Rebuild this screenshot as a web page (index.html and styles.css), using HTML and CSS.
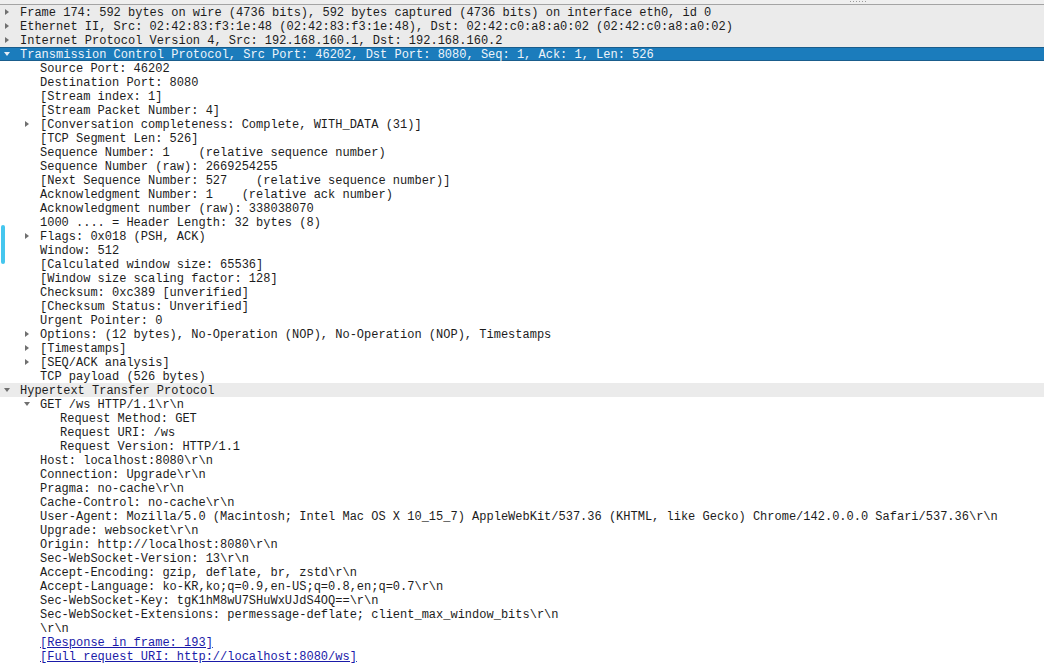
FILE: index.html
```
<!DOCTYPE html>
<html lang="en">
<head>
    <meta charset="UTF-8">
    <title>Packet Details</title>
    <link rel="stylesheet" href="styles.css">
</head>
<body>
    <div class="splitter">
        <div class="grip"><i></i><i></i><i></i><i></i><i></i><i></i></div>
    </div>

    <div class="tree">
        <div class="row top"><span class="arrow closed"></span>Frame 174: 592 bytes on wire (4736 bits), 592 bytes captured (4736 bits) on interface eth0, id 0</div>
        <div class="row top"><span class="arrow closed"></span>Ethernet II, Src: 02:42:83:f3:1e:48 (02:42:83:f3:1e:48), Dst: 02:42:c0:a8:a0:02 (02:42:c0:a8:a0:02)</div>
        <div class="row top"><span class="arrow closed"></span>Internet Protocol Version 4, Src: 192.168.160.1, Dst: 192.168.160.2</div>
        <div class="row selected"><span class="arrow open"></span>Transmission Control Protocol, Src Port: 46202, Dst Port: 8080, Seq: 1, Ack: 1, Len: 526</div>

        <!-- TCP -->
        <div class="row l1"><span class="arrow"></span>Source Port: 46202</div>
        <div class="row l1"><span class="arrow"></span>Destination Port: 8080</div>
        <div class="row l1"><span class="arrow"></span>[Stream index: 1]</div>
        <div class="row l1"><span class="arrow"></span>[Stream Packet Number: 4]</div>
        <div class="row l1"><span class="arrow closed"></span>[Conversation completeness: Complete, WITH_DATA (31)]</div>
        <div class="row l1"><span class="arrow"></span>[TCP Segment Len: 526]</div>
        <div class="row l1"><span class="arrow"></span>Sequence Number: 1    (relative sequence number)</div>
        <div class="row l1"><span class="arrow"></span>Sequence Number (raw): 2669254255</div>
        <div class="row l1"><span class="arrow"></span>[Next Sequence Number: 527    (relative sequence number)]</div>
        <div class="row l1"><span class="arrow"></span>Acknowledgment Number: 1    (relative ack number)</div>
        <div class="row l1"><span class="arrow"></span>Acknowledgment number (raw): 338038070</div>
        <div class="row l1"><span class="arrow"></span>1000 .... = Header Length: 32 bytes (8)</div>
        <div class="row l1"><span class="arrow closed"></span>Flags: 0x018 (PSH, ACK)</div>
        <div class="row l1"><span class="arrow"></span>Window: 512</div>
        <div class="row l1"><span class="arrow"></span>[Calculated window size: 65536]</div>
        <div class="row l1"><span class="arrow"></span>[Window size scaling factor: 128]</div>
        <div class="row l1"><span class="arrow"></span>Checksum: 0xc389 [unverified]</div>
        <div class="row l1"><span class="arrow"></span>[Checksum Status: Unverified]</div>
        <div class="row l1"><span class="arrow"></span>Urgent Pointer: 0</div>
        <div class="row l1"><span class="arrow closed"></span>Options: (12 bytes), No-Operation (NOP), No-Operation (NOP), Timestamps</div>
        <div class="row l1"><span class="arrow closed"></span>[Timestamps]</div>
        <div class="row l1"><span class="arrow closed"></span>[SEQ/ACK analysis]</div>
        <div class="row l1"><span class="arrow"></span>TCP payload (526 bytes)</div>

        <!-- HTTP -->
        <div class="row top"><span class="arrow open"></span>Hypertext Transfer Protocol</div>
        <div class="row l1"><span class="arrow open"></span>GET /ws HTTP/1.1\r\n</div>
        <div class="row l2"><span class="arrow"></span>Request Method: GET</div>
        <div class="row l2"><span class="arrow"></span>Request URI: /ws</div>
        <div class="row l2"><span class="arrow"></span>Request Version: HTTP/1.1</div>
        <div class="row l1"><span class="arrow"></span>Host: localhost:8080\r\n</div>
        <div class="row l1"><span class="arrow"></span>Connection: Upgrade\r\n</div>
        <div class="row l1"><span class="arrow"></span>Pragma: no-cache\r\n</div>
        <div class="row l1"><span class="arrow"></span>Cache-Control: no-cache\r\n</div>
        <div class="row l1"><span class="arrow"></span>User-Agent: Mozilla/5.0 (Macintosh; Intel Mac OS X 10_15_7) AppleWebKit/537.36 (KHTML, like Gecko) Chrome/142.0.0.0 Safari/537.36\r\n</div>
        <div class="row l1"><span class="arrow"></span>Upgrade: websocket\r\n</div>
        <div class="row l1"><span class="arrow"></span>Origin: http://localhost:8080\r\n</div>
        <div class="row l1"><span class="arrow"></span>Sec-WebSocket-Version: 13\r\n</div>
        <div class="row l1"><span class="arrow"></span>Accept-Encoding: gzip, deflate, br, zstd\r\n</div>
        <div class="row l1"><span class="arrow"></span>Accept-Language: ko-KR,ko;q=0.9,en-US;q=0.8,en;q=0.7\r\n</div>
        <div class="row l1"><span class="arrow"></span>Sec-WebSocket-Key: tgK1hM8wU7SHuWxUJdS4OQ==\r\n</div>
        <div class="row l1"><span class="arrow"></span>Sec-WebSocket-Extensions: permessage-deflate; client_max_window_bits\r\n</div>
        <div class="row l1"><span class="arrow"></span>\r\n</div>
        <div class="row l1"><span class="arrow"></span><a class="link" href="#">[Response in frame: 193]</a></div>
        <div class="row l1"><span class="arrow"></span><a class="link" href="#">[Full request URI: http://localhost:8080/ws]</a></div>
    </div>

    <div class="marker"></div>
</body>
</html>
```

FILE: styles.css
```
body {
    margin: 0;
    padding: 0;
    height: 669px;
    overflow: hidden;
    background-color: #fff;
    font-family: "Liberation Mono", monospace;
    font-size: 12px;
    color: #1c1c1c;
    position: relative;
}

.splitter {
    height: 4px;
    background-color: #efefef;
    border-bottom: 1px solid #a4a4a4;
    display: flex;
    justify-content: flex-end;
    padding-right: 178px;
}

.grip {
    display: flex;
    gap: 2px;
    padding-top: 1px;
}

.grip i {
    width: 1px;
    height: 1px;
    background-color: #9a9a9a;
}

/* text sits 1px low inside each 14px row */
.row {
    box-sizing: border-box;
    height: 14px;
    padding-top: 1px;
    line-height: 14px;
    white-space: pre;
    display: flex;
    align-items: flex-start;
}

.row.top {
    background-color: #ebebeb;
}

.row.selected {
    background-color: #1b7cbc;
    color: #eef4fa;
    box-shadow: inset 0 1px 0 #1a5d8c, inset 0 -1px 0 #1a5d8c;
}

.row.l1 {
    padding-left: 20px;
}

.row.l2 {
    padding-left: 40px;
}

.arrow {
    width: 20px;
    height: 14px;
    margin-top: -1px;
    flex-shrink: 0;
    position: relative;
}

.arrow.closed::before {
    content: "";
    position: absolute;
    left: 5px;
    top: 4px;
    border-left: 4px solid #707070;
    border-top: 3px solid transparent;
    border-bottom: 3px solid transparent;
}

.arrow.open::before {
    content: "";
    position: absolute;
    left: 4px;
    top: 5px;
    border-top: 4px solid #707070;
    border-left: 3px solid transparent;
    border-right: 3px solid transparent;
}

.selected .arrow.open::before {
    border-top-color: #e6eef6;
}

.link {
    color: #1a1aa8;
    text-decoration: underline;
}

.marker {
    position: absolute;
    left: 1px;
    top: 225px;
    width: 4px;
    height: 39px;
    border-radius: 2px;
    background-color: #45c6ee;
}
```
